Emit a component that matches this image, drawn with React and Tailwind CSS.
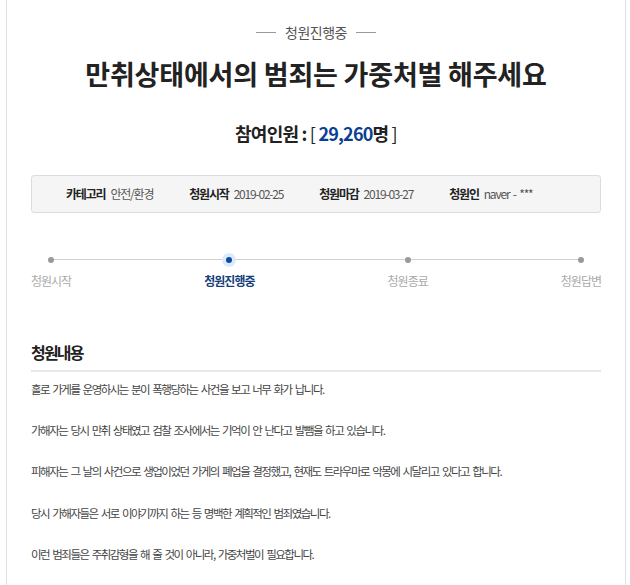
import React from "react";

const font = { fontFamily: '"Noto Sans CJK KR", "Noto Sans", sans-serif' };

const info = [
  { label: "카테고리", value: "안전/환경" },
  { label: "청원시작", value: "2019-02-25" },
  { label: "청원마감", value: "2019-03-27" },
  { label: "청원인", value: "naver - ***" },
];

const steps = ["청원시작", "청원진행중", "청원종료", "청원답변"];

const paragraphs = [
  "홀로 가게를 운영하시는 분이 폭행당하는 사건을 보고 너무 화가 납니다.",
  "가해자는 당시 만취 상태였고 검찰 조사에서는 기억이 안 난다고 발뺌을 하고 있습니다.",
  "피해자는 그 날의 사건으로 생업이었던 가게의 폐업을 결정했고, 현재도 트라우마로 악몽에 시달리고 있다고 합니다.",
  "당시 가해자들은 서로 이야기까지 하는 등 명백한 계획적인 범죄였습니다.",
  "이런 범죄들은 주취감형을 해 줄 것이 아니라, 가중처벌이 필요합니다.",
];

export default function App() {
  return (
    <div className="bg-white w-[630px] h-[585px] overflow-hidden" style={font}>
      <div className="ml-[6px] w-[620px] h-[600px] border-x border-[#e3e3e3] px-[24px] text-[#333]">
        {/* status */}
        <div className="flex items-center justify-center gap-[9px] pt-[22px] text-[14px] leading-[20px] text-[#555] tracking-[-0.5px]">
          <span className="w-[20px] h-px bg-[#999]" />
          <span>청원진행중</span>
          <span className="w-[20px] h-px bg-[#999]" />
        </div>

        <h1 className="mt-[14px] text-center text-[27px] leading-[36px] font-bold text-[#222] tracking-[-0.2px]">
          만취상태에서의 범죄는 가중처벌 해주세요
        </h1>

        <div className="mt-[28px] text-center text-[18px] leading-[26px] font-bold text-[#222] tracking-[-0.8px]">
          참여인원 : <span className="font-normal">[</span>{" "}
          <span className="text-[#0b3f91]">29,260</span>명{" "}
          <span className="font-normal">]</span>
        </div>

        {/* info box */}
        <div className="mt-[29px] h-[38px] rounded-[3px] border border-[#dcdcdc] bg-[#f5f5f5] flex items-center pl-[34px] gap-[36px] text-[12px] tracking-[-1.2px] [word-spacing:2px]">
          {info.map((it) => (
            <div key={it.label} className="flex items-center gap-[5px]">
              <span className="font-bold text-[#222]">{it.label}</span>
              <span className="text-[#555]">{it.value}</span>
            </div>
          ))}
        </div>

        {/* progress */}
        <div className="relative mt-[42px]">
          <div className="absolute left-[19px] right-[19px] top-[4px] h-px bg-[#cfcfcf]" />
          <div className="relative flex justify-between">
            {steps.map((s, i) => (
              <div key={s} className="flex flex-col items-center">
                <div className="h-[9px] flex items-center justify-center">
                  {i === 1 ? (
                    <span className="w-[6px] h-[6px] rounded-full bg-[#0b4aa2] shadow-[0_0_0_4px_#dcebfb]" />
                  ) : (
                    <span className="w-[6px] h-[6px] rounded-full bg-[#999]" />
                  )}
                </div>
                <span
                  className={
                    "mt-[9px] text-[12px] leading-[16px] tracking-[-1px] " +
                    (i === 1 ? "font-bold text-[#163f7c]" : "text-[#aaa]")
                  }
                >
                  {s}
                </span>
              </div>
            ))}
          </div>
        </div>

        {/* content */}
        <h2 className="mt-[52px] text-[16px] leading-[22px] font-bold text-[#222] tracking-[-1.8px]">
          청원내용
        </h2>
        <div className="mt-[7px] h-[2px] bg-[#e8e8e8]" />
        <div className="mt-[7px] text-[11.5px] leading-[20.6px] text-[#444] tracking-[-1.5px] [word-spacing:2px]">
          {paragraphs.map((p, i) => (
            <React.Fragment key={i}>
              {p}
              <br />
              <br />
            </React.Fragment>
          ))}
        </div>
      </div>
    </div>
  );
}
